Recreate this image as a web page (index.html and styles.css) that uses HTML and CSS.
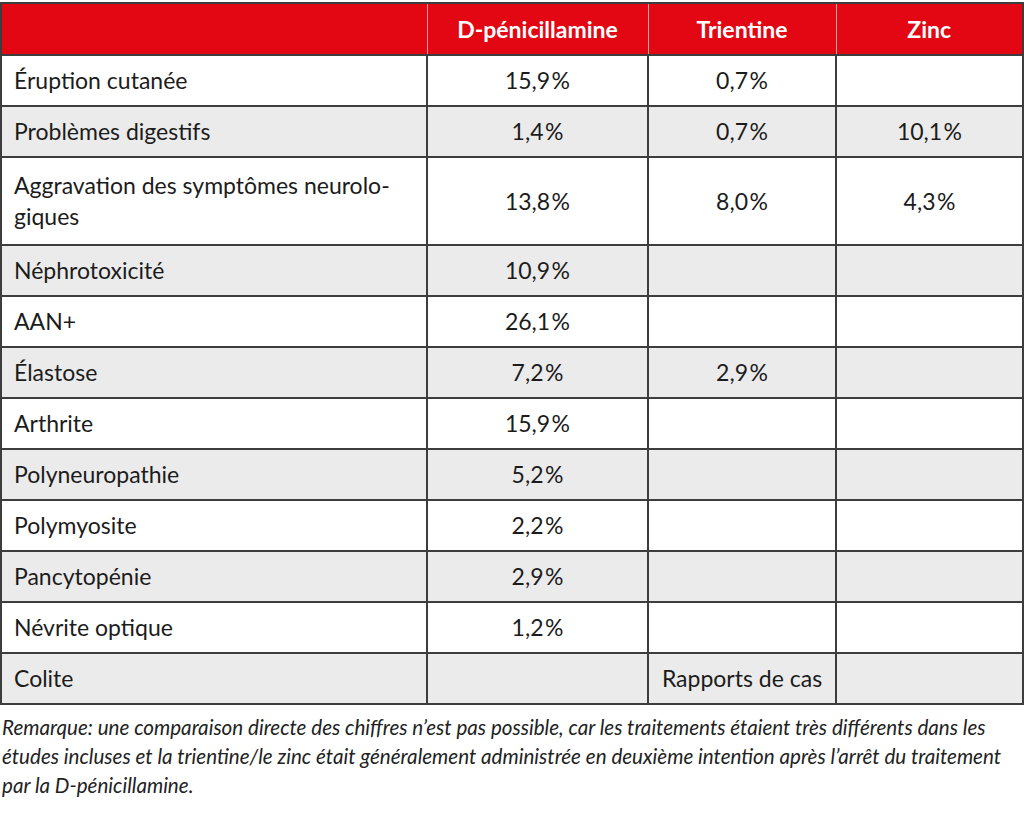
FILE: index.html
```html
<!DOCTYPE html>
<html lang="fr">
<head>
<meta charset="utf-8">
<link rel="stylesheet" href="styles.css">
</head>
<body>
<table class="tbl">
  <colgroup>
    <col class="c1"><col class="c2"><col class="c3"><col class="c4">
  </colgroup>
  <thead>
    <tr class="head">
      <th></th><th>D-pénicillamine</th><th>Trientine</th><th>Zinc</th>
    </tr>
  </thead>
  <tbody>
    <tr class="w"><td>Éruption cutanée</td><td>15,9&#8202;%</td><td>0,7&#8202;%</td><td></td></tr>
    <tr class="g"><td>Problèmes digestifs</td><td>1,4&#8202;%</td><td>0,7&#8202;%</td><td>10,1&#8202;%</td></tr>
    <tr class="w tall"><td>Aggravation des symptômes neurolo-<br>giques</td><td>13,8&#8202;%</td><td>8,0&#8202;%</td><td>4,3&#8202;%</td></tr>
    <tr class="g"><td>Néphrotoxicité</td><td>10,9&#8202;%</td><td></td><td></td></tr>
    <tr class="w"><td>AAN+</td><td>26,1&#8202;%</td><td></td><td></td></tr>
    <tr class="g"><td>Élastose</td><td>7,2&#8202;%</td><td>2,9&#8202;%</td><td></td></tr>
    <tr class="w"><td>Arthrite</td><td>15,9&#8202;%</td><td></td><td></td></tr>
    <tr class="g"><td>Polyneuropathie</td><td>5,2&#8202;%</td><td></td><td></td></tr>
    <tr class="w"><td>Polymyosite</td><td>2,2&#8202;%</td><td></td><td></td></tr>
    <tr class="g"><td>Pancytopénie</td><td>2,9&#8202;%</td><td></td><td></td></tr>
    <tr class="w"><td>Névrite optique</td><td>1,2&#8202;%</td><td></td><td></td></tr>
    <tr class="g"><td>Colite</td><td></td><td>Rapports de cas</td><td></td></tr>
  </tbody>
</table>
<p class="note">Remarque: une comparaison directe des chiffres n’est pas possible, car les traitements étaient très différents dans les<br>études incluses et la trientine/le zinc était généralement administrée en deuxième intention après l’arrêt du traitement<br>par la D-pénicillamine.</p>
</body>
</html>
```
FILE: styles.css
```css
html, body {
  margin: 0;
  padding: 0;
  background: #ffffff;
}
body {
  font-family: Lato, "Liberation Sans", sans-serif;
  color: #1c1c1c;
}
.tbl {
  border-collapse: collapse;
  width: 1022px;
  margin-top: 2px;
  table-layout: fixed;
  font-size: 23px;
}
.c1 { width: 426px; }
.c2 { width: 221px; }
.c3 { width: 188px; }
.c4 { width: 187px; }
.tbl th, .tbl td {
  border: 2px solid #3d3d3d;
  padding: 0;
}
.head th {
  background: #e30613;
  color: #ffffff;
  font-weight: 700;
  height: 50px;
  text-align: center;
  border-left-color: #f6a0a5;
  border-right-color: #f6a0a5;
  border-left-width: 1px;
  border-right-width: 1px;
}
.head th:first-child { border-left: 2px solid #3d3d3d; }
.head th:last-child { border-right: 2px solid #3d3d3d; }
.tbl td {
  height: 49px;
  text-align: center;
  line-height: 31px;
}
.tbl td:first-child {
  text-align: left;
  padding-left: 12px;
}
.tall td { height: 86px; }
.w td { background: #ffffff; }
.g td { background: #ebebeb; }
.note {
  margin: 8px 0 0 2px;
  font-style: italic;
  font-size: 20.6px;
  line-height: 29px;
  color: #222;
  white-space: nowrap;
}
```
